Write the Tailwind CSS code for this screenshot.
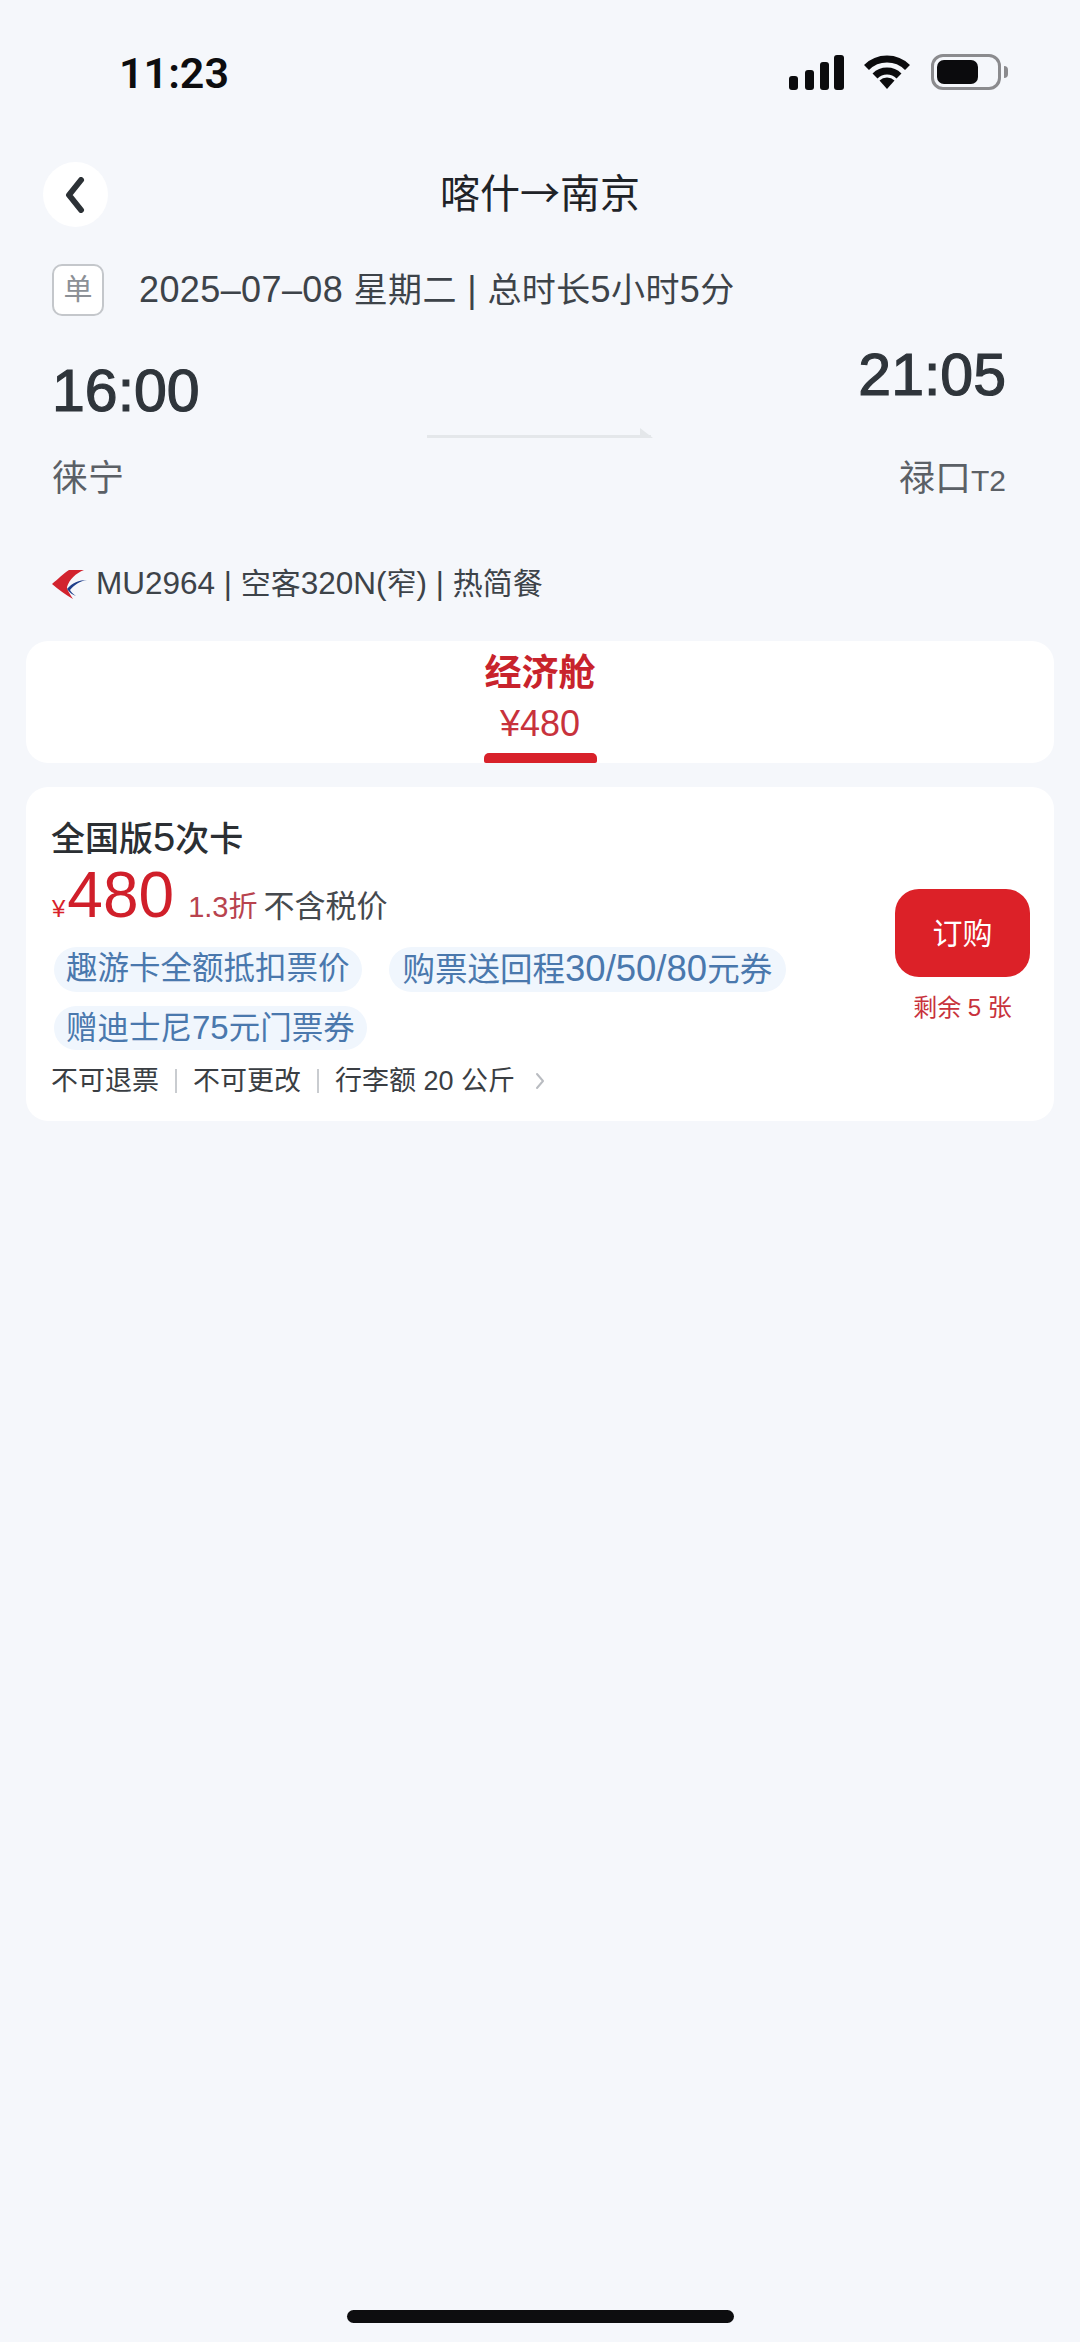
<!DOCTYPE html>
<html lang="zh-CN">
  <head>
    <meta charset="utf-8" />
    <meta content="width=device-width, initial-scale=1" name="viewport" />
    <title>喀什→南京</title>
    <script src="https://cdn.jsdelivr.net/npm/@tailwindcss/browser@4"></script>
  </head>
  <body>
    <div class="relative w-[1080px] h-[2342px] overflow-hidden bg-[#f5f7fb] font-['Liberation_Sans','Noto_Sans_CJK_SC',sans-serif]">

      <!-- Status bar -->
      <div class="h-[162px] flex justify-between items-start pt-[54px] pl-[119px] pr-[72px]">
        <span class="font-['Roboto',sans-serif] font-semibold text-[43px] leading-[38px] text-[#0d0d0f]">11:23</span>
        <div class="flex items-start">
          <svg class="w-[55px] h-[35px] mt-px" viewBox="0 0 55 35" fill="#0b0b0d">
            <rect x="0" y="21" width="9" height="14" rx="3" />
            <rect x="16" y="15" width="9" height="20" rx="3" />
            <rect x="31" y="7" width="9" height="28" rx="3" />
            <rect x="45" y="0" width="10" height="35" rx="3" />
          </svg>
          <svg class="w-[48px] h-[35px] ml-[19px]" viewBox="0 0 48 35" fill="none" stroke="#0b0b0d" stroke-width="7">
            <path d="M3.5 13.5A29 29 0 0 1 44.5 13.5" />
            <path d="M12 22A17 17 0 0 1 36 22" />
            <path d="M24 35L16.5 26.5A11 11 0 0 1 31.5 26.5Z" fill="#0b0b0d" stroke="none" />
          </svg>
          <div class="ml-[20px] w-[70px] h-[36px] rounded-[12px] border-[3px] border-[#8b8b8e] p-[3px]">
            <div class="w-[41px] h-full rounded-[7px] bg-[#0b0b0d]"></div>
          </div>
          <div class="ml-[3px] mt-[12px] w-[4px] h-[12px] rounded-r-full bg-[#8b8b8e]"></div>
        </div>
      </div>

      <!-- Nav -->
      <div class="relative h-[65px] flex items-center justify-center">
        <div class="absolute left-[43px] top-0 w-[65px] h-[65px] rounded-full bg-white flex items-center justify-center">
          <svg class="w-[24px] h-[36px] -ml-[2px]" viewBox="0 0 24 36" fill="none" stroke="#2c3136" stroke-width="6" stroke-linecap="round" stroke-linejoin="round">
            <path d="M18 3L6 18L18 33" />
          </svg>
        </div>
        <h1 class="pb-[8px] text-[40px] leading-[48px] font-normal text-[#1f2328] font-['Noto_Sans_CJK_SC',sans-serif]">喀什→南京</h1>
      </div>

      <!-- Date -->
      <div class="mt-[37px] ml-[52px] flex items-center">
        <div class="w-[52px] h-[52px] rounded-[10px] border-2 border-[#c4c7cb] bg-white flex items-center justify-center text-[29px] leading-none text-[#8c9096]">单</div>
        <span class="ml-[35px] text-[36px] leading-[44px] tracking-[0.4px] text-[#3d4349]">2025–07–08 <span class="text-[34px]">星期二</span> | <span class="text-[34px]">总时长</span>5<span class="text-[34px]">小时</span>5<span class="text-[34px]">分</span></span>
      </div>

      <!-- Times -->
      <div class="mt-[29px] px-[52px] grid grid-cols-[1fr_226px_1fr] items-start">
        <div>
          <div class="mt-[16px] text-[59px] leading-[60px] font-medium text-[#2f353b] [-webkit-text-stroke:1.2px_#2f353b]">16:00</div>
          <div class="mt-[36px] text-[36px] leading-[44px] text-[#5b6066]">徕宁</div>
        </div>
        <svg class="mt-[82px] w-[226px] h-[14px]" viewBox="0 0 226 14" fill="#e4e7ea">
          <rect x="0" y="8" width="224" height="3" />
          <path d="M213 1L226 11H213Z" />
        </svg>
        <div class="text-right pr-[22px]">
          <div class="text-[59px] leading-[60px] font-medium text-[#2f353b] [-webkit-text-stroke:1.2px_#2f353b]">21:05</div>
          <div class="mt-[52px] text-[36px] leading-[44px] text-[#5b6066]">禄口<span class="text-[30px]">T2</span></div>
        </div>
      </div>

      <!-- Flight -->
      <div class="mt-[62px] ml-[52px] flex items-center">
        <svg class="w-[35px] h-[30px]" viewBox="0 0 35 30">
          <path d="M32 1L17 1C12 4 6 10 0 15C6 20 14 26 21 30C18 25 15 21 15 18C17 11 24 4 32 1Z" fill="#d2232e" />
          <path d="M35 11C27 11 20 14 15 20C18 24 21 26 24 27C21 25 19 23 18 21C22 16 28 12 35 11Z" fill="#1f3f8a" />
        </svg>
        <span class="ml-[9px] text-[31.5px] leading-[36px] text-[#3d4349]">MU2964 | <span class="text-[30px]">空客</span>320N(<span class="text-[30px]">窄</span>) | <span class="text-[30px]">热简餐</span></span>
      </div>

      <!-- Cabin tab -->
      <div class="mt-[39px] mx-[26px] h-[122px] rounded-[22px] bg-white flex flex-col items-center">
        <div class="mt-[9px] text-[37px] leading-[48px] font-bold text-[#c8232c]">经济舱</div>
        <div class="mt-[5px] text-[36px] leading-[42px] text-[#c8323c]">¥480</div>
        <div class="mt-auto w-[113px] h-[10px] rounded-t-[5px] rounded-b-[2px] bg-[#d8212a]"></div>
      </div>

      <!-- Fare card -->
      <div class="mt-[24px] mx-[26px] h-[334px] rounded-[22px] bg-white flex pl-[25px] pr-[24px]">
        <div class="flex-1">
          <div class="mt-[28px] text-[34px] leading-[44px] font-medium text-[#2b2f33]">全国版<span class="text-[40px]">5</span>次卡</div>
          <div class="mt-[1px] ml-px flex items-baseline h-[66px]">
            <span class="text-[24px] text-[#d8212a]">¥</span>
            <span class="ml-[2px] text-[64px] leading-[66px] text-[#d01f2a]">480</span>
            <span class="ml-[14px] text-[29px] text-[#b8434e]">1.3折</span>
            <span class="ml-[6px] text-[31px] text-[#45494e]">不含税价</span>
          </div>
          <div class="mt-[19px] ml-[3px] flex flex-wrap gap-x-[27px] gap-y-[14px] text-[31.5px] leading-[43px] text-[#4a78ad]">
            <span class="px-[12px] rounded-full bg-[#f0f6fd]">趣游卡全额抵扣票价</span>
            <span class="px-[14px] rounded-full bg-[#f0f6fd] text-[32.5px]">购票送回程<span class="text-[36.5px]">30/50/80</span>元券</span>
            <span class="px-[12px] rounded-full bg-[#f0f6fd]">赠迪士尼<span class="text-[33px]">75</span>元门票券</span>
          </div>
          <div class="mt-[15px] flex items-center text-[27px] leading-[32px] text-[#3a3e43]">
            <span>不可退票</span>
            <span class="mx-[16px] w-[2px] h-[24px] bg-[#c9ccd0]"></span>
            <span>不可更改</span>
            <span class="mx-[16px] w-[2px] h-[24px] bg-[#c9ccd0]"></span>
            <span>行李额 20 公斤</span>
            <svg class="ml-[20px] w-[10px] h-[18px]" viewBox="0 0 10 18" fill="none" stroke="#b9bcc1" stroke-width="2" stroke-linecap="round" stroke-linejoin="round">
              <path d="M2 2L8 9L2 16" />
            </svg>
          </div>
        </div>
        <div class="w-[135px] flex flex-col items-center pt-[102px]">
          <div class="w-[135px] h-[88px] rounded-[24px] bg-[#dc2128] flex items-center justify-center text-[30px] text-white">订购</div>
          <div class="mt-[16px] text-[24px] leading-[30px] text-[#c8323c]">剩余 5 张</div>
        </div>
      </div>

      <!-- Home indicator -->
      <div class="absolute left-[347px] top-[2310px] w-[387px] h-[13px] rounded-full bg-[#0d0d0f]"></div>
    </div>
  </body>
</html>
